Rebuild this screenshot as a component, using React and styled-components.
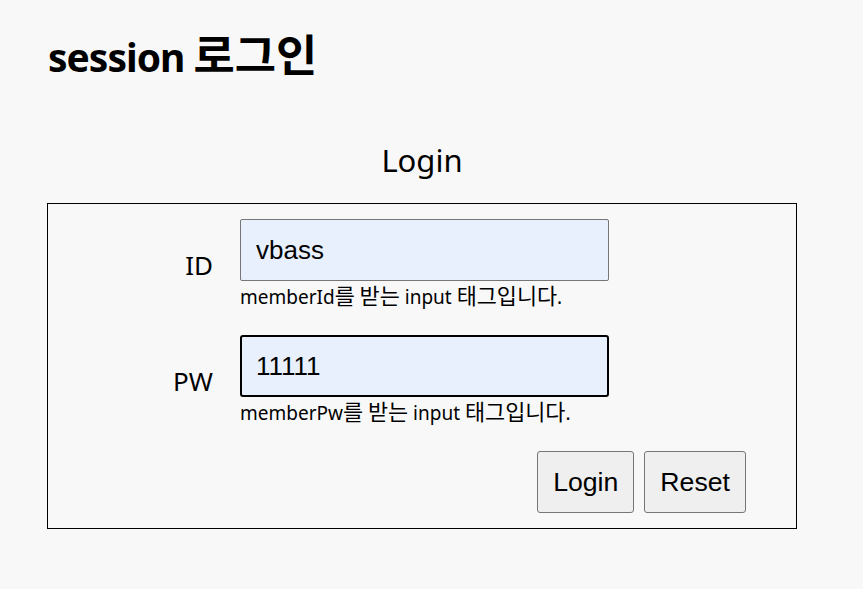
import React, { useState } from "react";
import styled, { createGlobalStyle } from "styled-components";

const GlobalStyle = createGlobalStyle`
  html, body {
    margin: 0;
    padding: 0;
    background: #f8f8f8;
  }
  body {
    font-family: "Noto Sans", "Noto Sans CJK KR", sans-serif;
    color: #000;
  }
`;

const Page = styled.div`
  padding: 28px 0 0 47px;
`;

const Title = styled.h1`
  margin: 0 0 0 1px;
  font-size: 39px;
  font-weight: 700;
  line-height: 58px;
  letter-spacing: -1px;
`;

// Hangul glyphs run wider in the original font
const Ko = styled.span`
  font-family: "Noto Sans CJK KR", sans-serif;
  font-size: 1.15em;
  line-height: 1;
  letter-spacing: 0;
`;

const Wrap = styled.div`
  width: 750px;
  margin-top: 54px;
`;

const SubTitle = styled.h2`
  margin: 0 0 23px;
  text-align: center;
  font-size: 31px;
  font-weight: 400;
  line-height: 40px;
`;

const Box = styled.form`
  border: 1px solid #000;
  padding: 15px 50px 15px 0;
  display: flex;
  flex-direction: column;
  gap: 25px;
`;

const Row = styled.div`
  display: flex;
  align-items: center;
  gap: 27px;
`;

const Label = styled.label`
  width: 165px;
  text-align: right;
  font-size: 26px;
`;

const Field = styled.div`
  display: flex;
  flex-direction: column;
`;

const Input = styled.input`
  box-sizing: border-box;
  width: 369px;
  height: 62px;
  font-family: "Liberation Sans", Arial, sans-serif;
  font-size: 26px;
  color: #000;
  caret-color: #000;
  background: #e8f0fe;
  border: ${(p) => (p.$focused ? "2px solid #000" : "1px solid #767676")};
  border-radius: ${(p) => (p.$focused ? "3px" : "2px")};
  padding: 0 15px 0 ${(p) => (p.$focused ? "14px" : "15px")};
  outline: none;
`;

const Help = styled.span`
  margin-top: 3px;
  height: 26px;
  font-size: 19px;
  line-height: 26px;
  white-space: nowrap;
`;

const Buttons = styled.div`
  display: flex;
  justify-content: flex-end;
  gap: 10px;
`;

const Button = styled.button`
  height: 62px;
  padding: 0 15px;
  font-family: "Liberation Sans", Arial, sans-serif;
  font-size: 26.67px;
  color: #000;
  background: #efefef;
  border: 1px solid #767676;
  border-radius: 3px;
`;

export default function App() {
  const [id, setId] = useState("vbass");
  const [pw, setPw] = useState("11111");

  return (
    <>
      <GlobalStyle />
      <Page>
        <Title>
          session <Ko>로그인</Ko>
        </Title>
        <Wrap>
          <SubTitle>Login</SubTitle>
          <Box onSubmit={(e) => e.preventDefault()}>
            <Row>
              <Label>ID</Label>
              <Field>
                <Input value={id} onChange={(e) => setId(e.target.value)} />
                <Help>
                  memberId<Ko>를 받는</Ko> input <Ko>태그입니다</Ko>.
                </Help>
              </Field>
            </Row>
            <Row>
              <Label>PW</Label>
              <Field>
                <Input
                  $focused
                  autoFocus
                  value={pw}
                  onChange={(e) => setPw(e.target.value)}
                />
                <Help>
                  memberPw<Ko>를 받는</Ko> input <Ko>태그입니다</Ko>.
                </Help>
              </Field>
            </Row>
            <Buttons>
              <Button type="submit">Login</Button>
              <Button type="reset">Reset</Button>
            </Buttons>
          </Box>
        </Wrap>
      </Page>
    </>
  );
}
